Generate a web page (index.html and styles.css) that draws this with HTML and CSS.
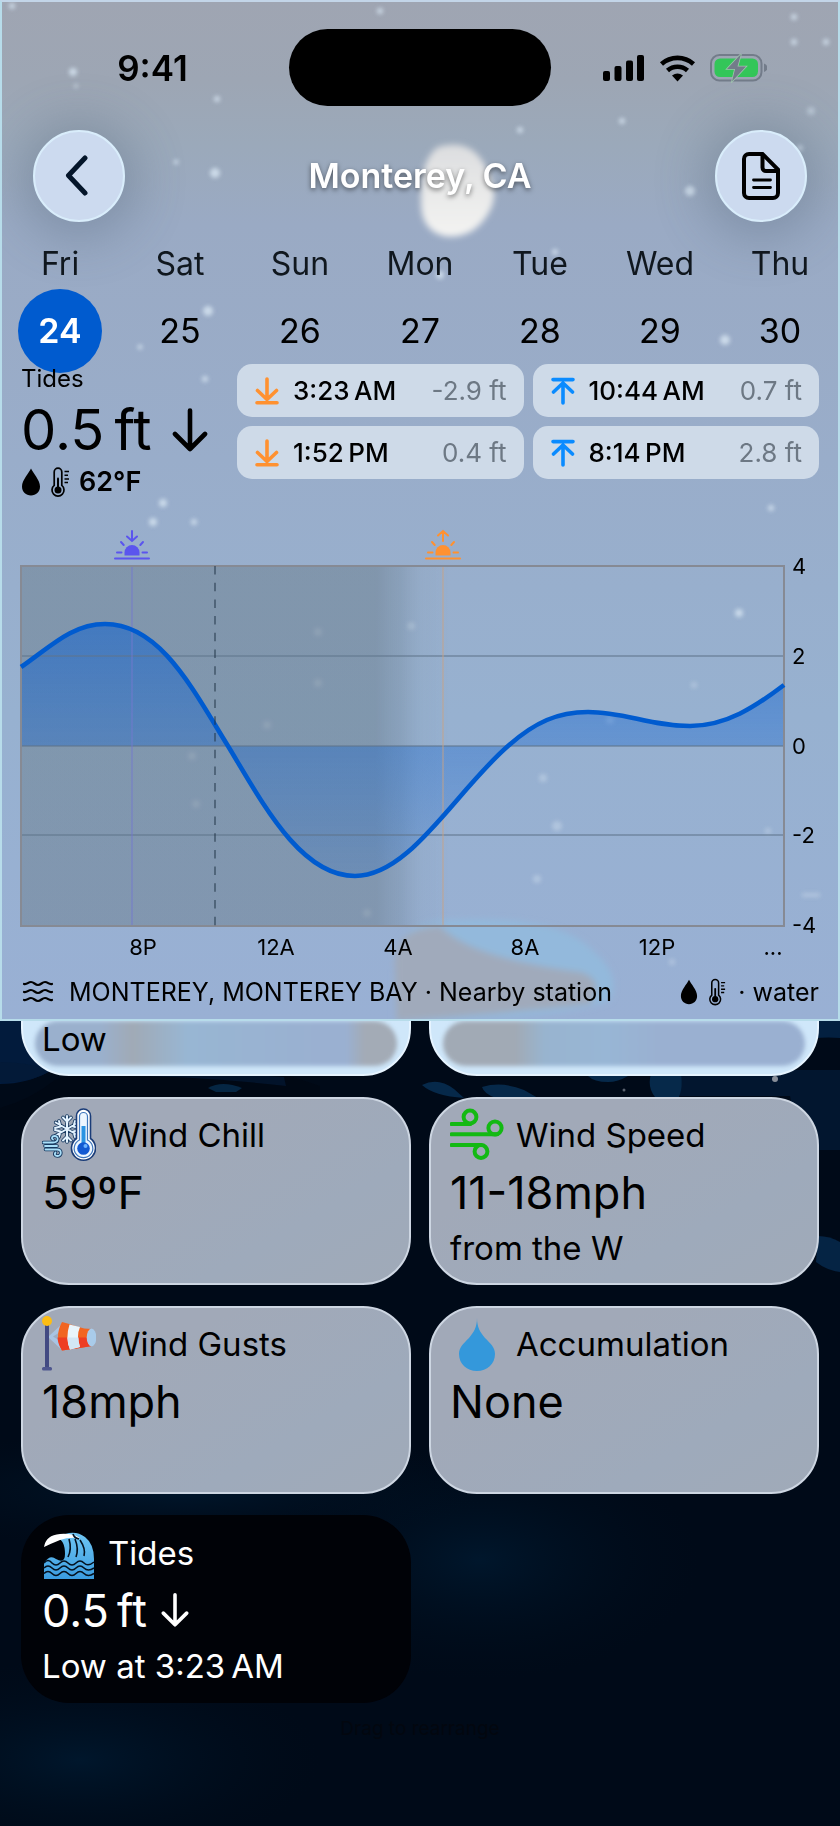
FILE: index.html
```html
<!DOCTYPE html>
<html lang="en">
<head>
<meta charset="utf-8">
<meta name="viewport" content="width=device-width, initial-scale=1">
<title>Monterey, CA</title>
<link rel="stylesheet" href="styles.css">
</head>
<body>
<svg width="0" height="0" class="defs" aria-hidden="true">
  <symbol id="low" viewBox="0 0 24 28"><path d="M12 2v20M2.500 13.500l9.500 9 9.500-9M2 25.800h20" fill="none" stroke="currentColor" stroke-width="3.600" stroke-linecap="round" stroke-linejoin="round"/></symbol>
  <symbol id="high" viewBox="0 0 24 28"><path d="M12 26V6M2.500 15l9.500-9 9.500 9M2 2.600h20" fill="none" stroke="currentColor" stroke-width="3.600" stroke-linecap="round" stroke-linejoin="round"/></symbol>
  <symbol id="down" viewBox="0 0 36 44"><path d="M18 2.500v38M3 26l15 15 15-15" fill="none" stroke="currentColor" stroke-width="4.600" stroke-linecap="round" stroke-linejoin="round"/></symbol>
  <symbol id="drop" viewBox="0 0 20 28"><path d="M10 .5C8 5 1 12 1 18.500 1 24 5 27.500 10 27.500s9-3.500 9-9C19 12 12 5 10 .5z" fill="currentColor"/></symbol>
  <symbol id="thermo" viewBox="0 0 20 30"><path d="M4.200 18.400V5a3.800 3.800 0 0 1 7.600 0v13.400a6 6 0 1 1-7.600 0z" fill="none" stroke="currentColor" stroke-width="1.700"/><circle cx="8" cy="23" r="3.500" fill="currentColor"/><path d="M8 23V11.500" stroke="currentColor" stroke-width="2" stroke-linecap="round"/><path d="M14.500 4.500H19M14.500 8.200H18M14.500 11.900H19M14.500 15.600H18" stroke="currentColor" stroke-width="1.500"/></symbol>
</svg>

<div class="screen">
  <svg class="night" viewBox="0 0 840 860" preserveAspectRatio="xMidYMin slice" aria-hidden="true">
    <defs>
    <radialGradient id="glow"><stop offset="0" stop-color="#002340" stop-opacity=".5"/><stop offset="1" stop-color="#001020" stop-opacity="0"/></radialGradient></defs>
    <rect width="840" height="860" fill="#000a18"/>
    <path d="M0 0H60V60H0z" fill="#021b3c"/>
    <path d="M0 84Q28 84 52 70L62 50Q100 70 290 64L300 20H0z" fill="#021b3c"/>
    <path d="M0 82Q30 84 52 70Q25 62 0 62z" fill="#031a38"/>
    <path d="M0 108Q30 100 55 80Q85 66 290 76L320 86V120H0z" fill="#000814"/>
    <path d="M92 76Q150 68 284 77L286 86Q180 74 92 76z" fill="#02132a"/>
    <path d="M208 88q14-8 34 0l-6 4h-20z" fill="#052643"/>
    <path d="M680 70H840V150H800L790 96H680z" fill="#02162f"/>
    <path d="M422 85q16-8 32 4l10 9q-30-2-42-13zM482 87q20-6 42 3l14 8h-42q-12-4-14-11zM588 76h40q-10 6-20 6-14 0-20-6zM651 74h30q2 14-2 23h-24q-8-10-4-23z" fill="#06294a"/>
    <path d="M800 42Q816 36 840 38V20H800z" fill="#032040"/>
    <path d="M818 236q12 0 22 6v30q-14-2-24-10z" fill="#052444"/>
    <circle cx="775" cy="79" r="3" fill="#8a8f99"/><circle cx="624" cy="90" r="1.500" fill="#59616e"/>
    <ellipse cx="480" cy="560" rx="220" ry="120" fill="url(#glow)"/>
    <ellipse cx="80" cy="760" rx="240" ry="100" fill="url(#glow)"/>
    <ellipse cx="180" cy="490" rx="320" ry="60" fill="url(#glow)"/>
  </svg>

  <header class="panel">
    <svg class="sky" viewBox="0 0 840 1021" preserveAspectRatio="xMidYMin slice" aria-hidden="true">
      <defs>
        <filter id="soft" x="-20%" y="-20%" width="140%" height="140%"><feGaussianBlur stdDeviation="3"/></filter>
        <filter id="speck" x="-5%" y="-5%" width="110%" height="110%"><feGaussianBlur stdDeviation="2"/></filter>
        <linearGradient id="moon" x1="0" y1="0" x2="0" y2="1"><stop offset="0" stop-color="#dcdddf"/><stop offset="1" stop-color="#f4f4f2"/></linearGradient>
      </defs>
      <path d="M438 147Q470 138 484 164Q502 192 488 214Q472 240 444 236Q420 230 421 200Q420 160 438 147z" fill="url(#moon)" filter="url(#soft)"/>
      <g filter="url(#soft)">
        <path d="M395 960Q400 920 450 920Q560 915 592 950Q622 975 610 1000Q560 1020 395 1021z" fill="#93b9dc"/>
        <path d="M395 970Q390 928 440 926Q470 958 580 972Q606 980 590 1004Q520 1012 396 1021z" fill="#a0aabb"/>
      </g>
      <g fill="#d5e3f0" opacity=".85" filter="url(#speck)">
        <circle cx="215" cy="173" r="5"/><circle cx="73" cy="72" r="4"/><circle cx="76" cy="86" r="2"/><circle cx="217" cy="99" r="3"/><circle cx="380" cy="11" r="3"/><circle cx="12" cy="6" r="3"/><circle cx="176" cy="162" r="2.500"/><circle cx="690" cy="191" r="5"/><circle cx="800" cy="148" r="3"/><circle cx="794" cy="17" r="3"/><circle cx="794" cy="42" r="3"/><circle cx="826" cy="42" r="3"/><circle cx="811" cy="111" r="4" opacity=".6"/><circle cx="622" cy="121" r="3"/><circle cx="520" cy="130" r="3"/>
        <circle cx="208" cy="311" r="5"/><circle cx="140" cy="347" r="2.500"/><circle cx="205" cy="379" r="3"/><circle cx="725" cy="340" r="5"/><circle cx="163" cy="503" r="4"/><circle cx="153" cy="522" r="4"/><circle cx="194" cy="522" r="3"/><circle cx="771" cy="508" r="3"/><circle cx="739" cy="613" r="4"/><circle cx="440" cy="275" r="4"/><circle cx="555" cy="252" r="3"/>
        <g opacity=".5"><circle cx="318" cy="632" r="4"/><circle cx="318" cy="683" r="4"/><circle cx="267" cy="725" r="4"/><circle cx="192" cy="756" r="4"/><circle cx="196" cy="804" r="4"/><circle cx="367" cy="913" r="4"/><circle cx="411" cy="626" r="4"/><circle cx="610" cy="720" r="4"/><circle cx="543" cy="778" r="4"/><circle cx="557" cy="826" r="5"/><circle cx="537" cy="879" r="4"/><circle cx="768" cy="831" r="3"/><circle cx="694" cy="685" r="3"/><circle cx="672" cy="962" r="3"/><rect x="802" y="893" width="18" height="4"/></g>
      </g>
    </svg>

    <div class="status">
      <span class="time">9:41</span>
      <span class="island"></span>
      <svg class="signals" viewBox="0 0 166 30" role="img" aria-label="Signal, Wi-Fi, battery charging">
        <g fill="#000"><rect x="2" y="18" width="7" height="10" rx="2"/><rect x="13.500" y="13" width="7" height="15" rx="2"/><rect x="25" y="7.500" width="7" height="20.500" rx="2"/><rect x="36" y="2" width="7" height="26" rx="2"/></g>
        <g fill="none" stroke="#000" stroke-width="4.600"><path d="M60.500 11a24 24 0 0 1 32 0"/><path d="M66.500 17.500a15 15 0 0 1 20 0"/></g><path d="M71 22.500a9 9 0 0 1 11 0L76.500 28.500z" fill="#000"/>
        <rect x="110" y="2" width="50.500" height="25.500" rx="8.500" fill="none" stroke="#737c8a" stroke-width="2"/><rect x="113.500" y="5.500" width="43.500" height="18.500" rx="5.500" fill="#33c659"/><path d="M163 10.500q3.500 1.300 3.500 4.200t-3.500 4.200z" fill="#737c8a"/>
        <path d="M140 1L126 16h8l-3 12.500L145 13.500h-8.500z" fill="#737c8a" stroke="#9fc3ae" stroke-width="1.600" paint-order="stroke"/>
      </svg>
    </div>

    <nav class="nav">
      <button class="round" type="button" aria-label="Back"><svg width="28" height="42" viewBox="0 0 28 42"><path d="M20 3L3.500 20.500 20 38" fill="none" stroke="#04152a" stroke-width="5" stroke-linecap="round" stroke-linejoin="round"/></svg></button>
      <h1>Monterey, CA</h1>
      <button class="round" type="button" aria-label="Report"><svg width="40" height="50" viewBox="0 0 40 50"><path d="M8 3h13.500L37 18.500V42a5 5 0 0 1-5 5H8a5 5 0 0 1-5-5V8a5 5 0 0 1 5-5z" fill="none" stroke="#000" stroke-width="4"/><path d="M21.500 4v12.500a3.500 3.500 0 0 0 3.500 3.500h12" fill="none" stroke="#000" stroke-width="4"/><path d="M12.500 29h17M12.500 36.500h17" stroke="#000" stroke-width="2.800" stroke-linecap="round"/></svg></button>
    </nav>

    <div class="days">
      <button class="day day--on" type="button"><span>Fri</span><b>24</b></button>
      <button class="day" type="button"><span>Sat</span><b>25</b></button>
      <button class="day" type="button"><span>Sun</span><b>26</b></button>
      <button class="day" type="button"><span>Mon</span><b>27</b></button>
      <button class="day" type="button"><span>Tue</span><b>28</b></button>
      <button class="day" type="button"><span>Wed</span><b>29</b></button>
      <button class="day" type="button"><span>Thu</span><b>30</b></button>
    </div>

    <section class="summary">
      <div class="now">
        <h2>Tides</h2>
        <p class="level">0.5&#8201;ft <svg width="36" height="44"><use href="#down"/></svg></p>
        <p class="water"><svg width="20" height="28"><use href="#drop"/></svg><svg width="20" height="30"><use href="#thermo"/></svg><span>62°F</span></p>
      </div>
      <ul class="events">
        <li class="low"><svg width="24" height="28"><use href="#low"/></svg><time>3:23&#8201;AM</time><span>-2.9 ft</span></li>
        <li class="high"><svg width="24" height="28"><use href="#high"/></svg><time>10:44&#8201;AM</time><span>0.7 ft</span></li>
        <li class="low"><svg width="24" height="28"><use href="#low"/></svg><time>1:52&#8201;PM</time><span>0.4 ft</span></li>
        <li class="high"><svg width="24" height="28"><use href="#high"/></svg><time>8:14&#8201;PM</time><span>2.8 ft</span></li>
      </ul>
    </section>

    <svg class="chart" viewBox="0 520 840 445" role="img" aria-label="Tide height by hour">
      <defs>
        <linearGradient id="dark" x1="21" x2="784" y1="0" y2="0" gradientUnits="userSpaceOnUse"><stop offset=".465" stop-color="#667886" stop-opacity=".46"/><stop offset=".5" stop-color="#6c8192" stop-opacity=".3"/><stop offset=".525" stop-color="#7d93a6" stop-opacity=".12"/><stop offset=".56" stop-color="#7d93a6" stop-opacity="0"/></linearGradient>
        <linearGradient id="fill" x1="0" x2="0" y1="624" y2="876" gradientUnits="userSpaceOnUse"><stop offset="0" stop-color="#0a5fd0" stop-opacity=".52"/><stop offset=".48" stop-color="#0a5fd0" stop-opacity=".34"/><stop offset="1" stop-color="#0a5fd0" stop-opacity=".16"/></linearGradient>
      </defs>
      <rect x="21" y="566" width="440" height="360" fill="url(#dark)"/>
      <path d="M21 667C50 647 72 624 105 624C160 624 192 688 228 746C262 802 300 876 355 876C410 876 455 792 508 746C535 722 558 712 588 712C625 712 650 726 690 726C726 726 755 707 784 685V746H21z" fill="url(#fill)"/>
      <path d="M21 656H784M21 746H784M21 835H784" stroke="#60748a" stroke-opacity=".7" stroke-width="1.500"/>
      <rect x="21" y="566" width="763" height="360" fill="none" stroke="#868a94" stroke-width="2"/>
      <path d="M132 567V925" stroke="#7377cf" stroke-opacity=".45" stroke-width="2"/>
      <path d="M443 567V925" stroke="#c7a184" stroke-opacity=".45" stroke-width="2"/>
      <path d="M21 667C50 647 72 624 105 624C160 624 192 688 228 746C262 802 300 876 355 876C410 876 455 792 508 746C535 722 558 712 588 712C625 712 650 726 690 726C726 726 755 707 784 685" fill="none" stroke="#005bcf" stroke-width="4.600"/>
      <path d="M215 566V926" stroke="#1f3346" stroke-opacity=".5" stroke-width="2" stroke-dasharray="8.500 8.200"/>
      <g stroke="#5b55ee" stroke-width="2" stroke-linecap="round" fill="none" transform="translate(132 530)"><path d="M-7.500 25.500v-3a7.500 7.500 0 0 1 15 0v3z" fill="#5b55ee" stroke="none"/><path d="M-17 28.500h34M-15 22.500h4.500M10.500 22.500H15M-11 12l2.700 3M11 12l-2.700 3M0 1v9M-5 6.500L0 11l5-4.500"/></g>
      <g stroke="#ff9130" stroke-width="2" stroke-linecap="round" fill="none" transform="translate(443 530)"><path d="M-7.500 25.500v-3a7.500 7.500 0 0 1 15 0v3z" fill="#ff9130" stroke="none"/><path d="M-17 28.500h34M-15 22.500h4.500M10.500 22.500H15M-11 12l2.700 3M11 12l-2.700 3M0 11V1.500M-5 5.500L0 1l5 4.500"/></g>
      <g class="ticks">
        <text x="792" y="574">4</text><text x="792" y="664">2</text><text x="792" y="754">0</text><text x="792" y="843">-2</text><text x="792" y="933">-4</text>
      </g>
      <g class="ticks ticks--mid">
        <text x="143" y="955">8P</text><text x="276" y="955">12A</text><text x="398" y="955">4A</text><text x="525" y="955">8A</text><text x="657" y="955">12P</text><text x="773" y="955">...</text>
      </g>
    </svg>

    <div class="station">
      <svg width="32" height="24" viewBox="0 0 32 24"><path d="M2 4c3 1 4-2 7-2s4 3 7 3 4-3 7-3 4 3 7 2M2 12c3 1 4-2 7-2s4 3 7 3 4-3 7-3 4 3 7 2M2 20c3 1 4-2 7-2s4 3 7 3 4-3 7-3 4 3 7 2" fill="none" stroke="#000" stroke-width="2.200" stroke-linecap="round"/></svg>
      <p>MONTEREY, MONTEREY BAY · Nearby station</p>
      <svg width="18" height="26"><use href="#drop"/></svg>
      <svg width="18" height="28"><use href="#thermo"/></svg>
      <p>· water</p>
    </div>
  </header>

  <main class="cards">
    <article class="card card--glow"><h2></h2><p class="value"></p><p class="note">Low</p></article>
    <article class="card card--glow card--glow-right"></article>

    <article class="card">
      <h2><svg width="54" height="54" viewBox="0 0 54 54">
        <g stroke-linecap="round" fill="none">
          <path d="M25 8v26M13.700 14.500l22.600 13M36.300 14.500l-22.600 13M21 9.500l4 4 4-4M21 32.500l4-4 4 4M13 20l5.500-1.500L17 13M33 29l-1.500-5.500L37 22M17 29l1.500-5.500L13 22M33 13l-1.500 5.500L37 20" stroke="#15385f" stroke-width="3.600"/><path d="M25 8v26M13.700 14.500l22.600 13M36.300 14.500l-22.600 13M21 9.500l4 4 4-4M21 32.500l4-4 4 4M13 20l5.500-1.500L17 13M33 29l-1.500-5.500L37 22M17 29l1.500-5.500L13 22M33 13l-1.500 5.500L37 20" stroke="#e4f3ff" stroke-width="2"/>
          <path id="gust" d="M1.500 34.500H11c6 0 6-6.500 1.500-6.500-2.500 0-3.500 2.500-1.500 3.500M3 38H15M3.500 41.500H15c5 0 5 6.500.5 6.500-2.500 0-3.500-2-2-3.500" stroke="#15385f" stroke-width="3.600"/><path d="M1.500 34.500H11c6 0 6-6.500 1.500-6.500-2.500 0-3.500 2.500-1.500 3.500M3 38H15M3.500 41.500H15c5 0 5 6.500.5 6.500-2.500 0-3.500-2-2-3.500" stroke="#a9def8" stroke-width="1.800"/>
        </g>
        <path d="M34.500 30.500V8a7 7 0 0 1 14 0v22.500a12 12 0 1 1-14 0z" fill="#fff" stroke="#1a3c78" stroke-width="1.600"/>
        <path d="M37.500 32V8.500a4 4 0 0 1 8 0V32a9.300 9.300 0 1 1-8 0z" fill="#edf6ff" stroke="#3f77bd" stroke-width="1.200"/>
        <path d="M39.500 18h4v17h-4z" fill="#2a93e2"/><circle cx="41.500" cy="40.500" r="6.300" fill="#1259d2"/><circle cx="43.500" cy="38" r="2" fill="#6bb3ff"/>
      </svg>Wind Chill</h2>
      <p class="value">59ºF</p>
    </article>
    <article class="card">
      <h2><svg width="54" height="54" viewBox="0 0 54 54"><g fill="none" stroke="#13b913" stroke-width="4" stroke-linecap="round"><path d="M1.500 16H20.500"/><circle cx="20" cy="9" r="6.400"/><path d="M1.500 26.300H47"/><circle cx="45" cy="20" r="6.600"/><path d="M1.500 37H31"/><circle cx="31" cy="43.500" r="6.400"/></g></svg>Wind Speed</h2>
      <p class="value">11-18mph</p>
      <p class="note">from the W</p>
    </article>

    <article class="card">
      <h2><svg width="54" height="56" viewBox="0 0 54 56">
        <path d="M6 21L21 7v28z" fill="#a8c4e4"/><path d="M11 20.500l8-5v10z" fill="#9fadc4"/>
        <path d="M20 6q8 2 15 4.500T50 13q4 8 0 17-14 2.500-30 4.500-8-14 0-28.500z" fill="#f16522"/>
        <path d="M15.500 21.500H52Q52 26 50 30q-14 2.500-30 4.500-4-6-4.500-13z" fill="#ee3d22"/>
        <path d="M27.500 8.500L38 11q-4 9 0 20l-10 2.500q-5-11-.5-25z" fill="#e9f5fc"/><path d="M25.500 21.500h11q0 5 1.500 9.500l-10 2.500q-2.500-6-2.500-12z" fill="#d3e7f5"/>
        <ellipse cx="49.500" cy="21.500" rx="4.800" ry="9" fill="#a9cbea"/>
        <path d="M3 8h4v45H3z" fill="#424a82"/><rect y="51" width="10" height="3.500" rx="1.500" fill="#4e568e"/><circle cx="5" cy="5" r="5" fill="#fcbd14"/>
      </svg>Wind Gusts</h2>
      <p class="value">18mph</p>
    </article>
    <article class="card">
      <h2><svg width="54" height="54" viewBox="0 0 54 54"><path d="M27 1c0 9-3 14-8 20-5 5-10 9-10 16 0 10 8 17 18 17s18-7 18-17c0-7-5-11-10-16-5-6-8-11-8-20z" fill="#3498db"/></svg>Accumulation</h2>
      <p class="value">None</p>
    </article>

    <article class="card card--dark">
      <h2><svg width="54" height="54" viewBox="0 0 54 54">
        <defs><linearGradient id="sea" x1="0" y1="0" x2="0" y2="1"><stop offset="0" stop-color="#6fc5f3"/><stop offset="1" stop-color="#3a9ce0"/></linearGradient></defs>
        <path d="M2 37q6-9 12-4 9 5 9-5 0-14-8-16Q31 2 43 11q9 7 9 22v20H2z" fill="url(#sea)"/>
        <path d="M2 21Q4 9 18 8q12-1 20 4-12-1-20 2-10 4-16 7z" fill="#fff"/>
        <g fill="none" stroke="#04111f" stroke-width="1.600"><path d="M27 13q3 10-1 18M33 13q4 10 1 18M38 14q6 9 4 16M31 8q1 4 6 5"/><path d="M2 37q4-5 8 0 4 4 8 0t8 0 8 0 8 0 10-1M2 42q4-4 8 0t8 0 8 0 8 0 8 0 10 0M2 47.500q4-4 8 0t8 0 8 0 8 0 8 0 10 0"/></g>
      </svg>Tides</h2>
      <p class="value">0.5&#8201;ft <svg width="28" height="36" viewBox="0 0 36 44"><use href="#down"/></svg></p>
      <p class="note">Low at 3:23&#8201;AM</p>
    </article>
  </main>
  <p class="hint">Drag to rearrange</p>
</div>
</body>
</html>
```
FILE: styles.css
```css
* { box-sizing: border-box; }
body, h1, h2, p, ul { margin: 0; padding: 0; }
body {
  font-family: Inter, "Noto Sans", sans-serif;
  font-weight: 400;
  color: #000;
  background: #000a18;
}
button { border: 0; padding: 0; background: none; font: inherit; color: inherit; }
.defs { position: absolute; }
svg { flex: none; }

.screen { position: relative; min-height: 100vh; overflow: hidden; }
.night { position: absolute; top: 1000px; left: 0; width: 100%; }

.panel {
  position: relative;
  z-index: 2;
  overflow: hidden;
  background: linear-gradient(#9fa5b2 0, #9da6b4 8%, #9ba9ba 14%, #9aaac4 22%, #99adca 45%, #97b1d0 70%, #99b0d4 100%);
}
.panel::after {
  content: "";
  position: absolute;
  inset: 0;
  border: 2px solid #b7dcea;
  border-top-color: #c3d5e8;
  pointer-events: none;
}
.sky { position: absolute; inset: 0; width: 100%; height: 100%; }
.status, .nav, .days, .summary, .chart, .station { position: relative; }

.status {
  display: grid;
  grid-template-columns: 1fr 262px 1fr;
  align-items: center;
  padding-top: 29px;
}
.time { justify-self: center; padding-left: 16px; font-size: 35px; font-weight: 600; }
.island { height: 77px; border-radius: 39px; background: #000; }
.signals { width: 166px; height: 30px; justify-self: center; margin-right: 24px; }

.nav {
  display: flex;
  align-items: center;
  justify-content: space-between;
  padding: 24px 33px 0;
}
.nav h1 {
  font-size: 34px;
  line-height: 40px;
  font-weight: 600;
  color: #fff;
  text-shadow: 0 2px 5px rgba(0, 0, 0, .5);
}
.round {
  display: grid;
  place-items: center;
  width: 92px;
  height: 92px;
  border-radius: 50%;
  border: 2px solid #d9edfb;
  background: #ccdaef;
  box-shadow: 0 4px 50px 12px rgba(70, 90, 110, .32);
}

.days { display: grid; grid-template-columns: repeat(7, 1fr); padding-top: 22px; }
.day { display: flex; flex-direction: column; align-items: center; gap: 5px; }
.day span { font-size: 32px; line-height: 40px; color: #10171e; }
.day b {
  width: 84px;
  border-radius: 42px;
  font-size: 34px;
  line-height: 84px;
  font-weight: 400;
}
.day--on b { background: #005bcf; color: #fff; font-weight: 600; }

.summary {
  display: grid;
  grid-template-columns: 206px 1fr;
  gap: 10px;
  margin-top: -9px;
  padding: 0 21px;
  height: 156px;
}
.now h2 { font-size: 24px; line-height: 30px; font-weight: 400; }
.level { display: flex; align-items: center; gap: 20px; font-size: 56px; line-height: 72px; white-space: nowrap; }
.water { display: flex; align-items: center; gap: 9px; font-size: 27px; line-height: 32px; font-weight: 600; }
.events {
  display: grid;
  grid-template-columns: 1fr 1fr;
  gap: 9px;
  align-content: start;
  list-style: none;
}
.events li {
  display: flex;
  align-items: center;
  height: 53px;
  padding: 0 17px 0 18px;
  border-radius: 15px;
  background: #cedae8;
  font-size: 26px;
  white-space: nowrap;
}
.events time { margin-left: 14px; font-weight: 500; }
.events span { margin-left: auto; color: #6d7884; }
.low svg { color: #ff9130; }
.high svg { color: #0a8bff; }

.chart { display: block; width: 100%; }
.ticks { font-size: 22px; }
.ticks--mid { text-anchor: middle; }

.station {
  display: flex;
  align-items: center;
  height: 56px;
  padding: 0 21px 2px 22px;
  font-size: 25px;
}
.station p:nth-of-type(1) { margin: 0 auto 0 15px; }
.station svg + svg { margin: 0 12px 0 10px; }

.cards {
  position: relative;
  z-index: 1;
  display: grid;
  grid-template-columns: 1fr 1fr;
  grid-auto-rows: 188px;
  gap: 21px 18px;
  margin-top: -133px;
  padding: 0 21px;
}
.card {
  position: relative;
  padding: 9px 19px;
  border-radius: 48px;
  border: 2px solid #cdd6e2;
  background: linear-gradient(150deg, #a1a9b8 30%, #9eaabb 70%, #a0aab8);
  background-origin: border-box;
}
.card h2 {
  display: flex;
  align-items: center;
  gap: 12px;
  height: 54px;
  font-size: 33px;
  font-weight: 400;
}
.value { display: flex; align-items: center; gap: 14px; height: 60px; font-size: 45px; }
.note { position: relative; font-size: 33px; line-height: 52px; }
.card--glow { border-color: #e6f4ff; background: #cfe7fa; }
.card--glow::before {
  content: "";
  position: absolute;
  left: 12px;
  right: 12px;
  bottom: 8px;
  height: 45px;
  border-radius: 23px;
  background: linear-gradient(90deg, #9ab0cd 18%, #a0aab6 27%, #98b6d3 42%, #9ab0d1 80%, #9ab0d1 86%, #a3abb6 91%);
  filter: blur(2px);
}
.card--glow-right::before { background: linear-gradient(90deg, #a1aab5 20%, #98b4cf 28%, #98b6d5 45%, #9ab0d1 60%); }
.card--dark { border-color: transparent; background: #000207; background-clip: border-box; color: #fff; }

.hint { position: relative; margin-top: 12px; padding-bottom: 60px; text-align: center; font-size: 19px; line-height: 28px; color: #03070f; }
```
